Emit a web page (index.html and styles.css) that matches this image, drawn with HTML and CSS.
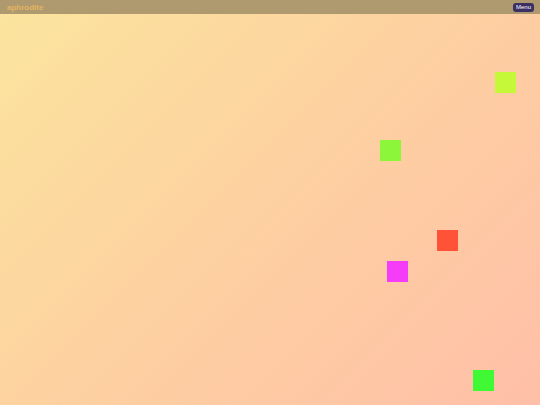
FILE: index.html
```html
<!DOCTYPE html>
<html>
<head>
<meta charset="utf-8">
<link rel="stylesheet" href="styles.css">
</head>
<body>
<div class="page">
  <header class="bar">
    <span class="logo">aphrodite</span>
    <button class="menu">Menu</button>
  </header>
  <main class="canvas">
    <div class="sq sq1"></div>
    <div class="sq sq2"></div>
    <div class="sq sq3"></div>
    <div class="sq sq4"></div>
    <div class="sq sq5"></div>
  </main>
</div>
</body>
</html>
```
FILE: styles.css
```css
html, body {
  margin: 0;
  padding: 0;
}
.page {
  width: 540px;
  height: 405px;
  position: relative;
  overflow: hidden;
  background: linear-gradient(135deg, #fbe59e 0%, #fdd2a0 45%, #ffbfa8 100%);
  font-family: "Liberation Sans", Arial, sans-serif;
}
.bar {
  height: 14px;
  background: #ae9a6e;
  display: flex;
  align-items: center;
  justify-content: space-between;
  padding: 0 6px 0 7px;
  box-sizing: border-box;
}
.logo {
  color: #e3b462;
  font-weight: bold;
  font-size: 8px;
}
.menu {
  background: #3b2f63;
  color: #ffffff;
  border: none;
  border-radius: 3px;
  font-family: "Liberation Sans", Arial, sans-serif;
  font-size: 6px;
  height: 9px;
  padding: 0 3px;
  line-height: 9px;
}
.canvas {
  position: relative;
  height: 391px;
}
.sq {
  position: absolute;
  width: 21px;
  height: 21px;
}
.sq1 { left: 495px; top: 58px; background: #c6f83a; }
.sq2 { left: 380px; top: 126px; background: #8cf63a; }
.sq3 { left: 437px; top: 216px; background: #ff5236; }
.sq4 { left: 387px; top: 247px; background: #f53cf8; }
.sq5 { left: 473px; top: 356px; background: #3ef934; }
```
